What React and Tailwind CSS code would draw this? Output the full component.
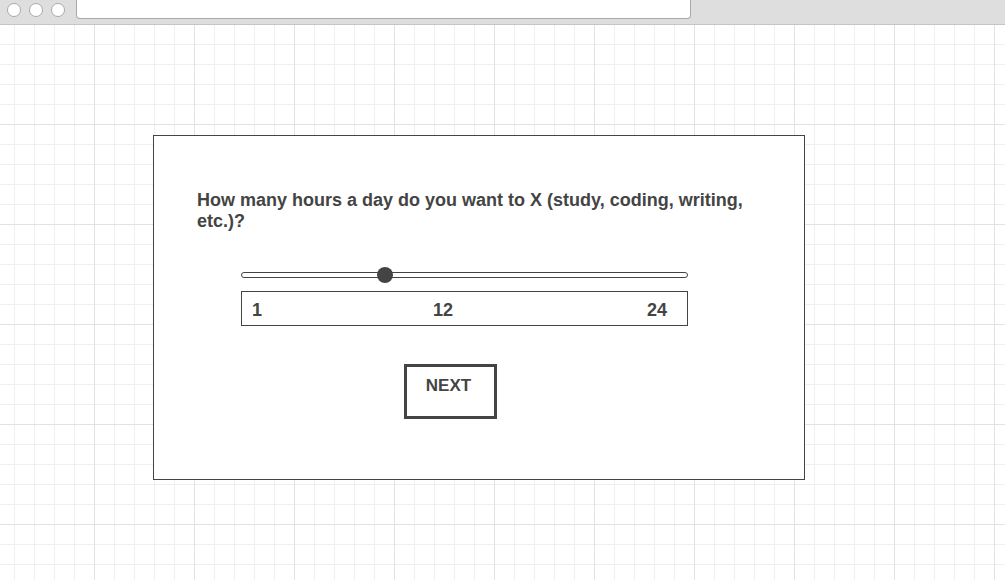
import React from "react";

export default function App() {
  const labels = ["1", "12", "24"];

  return (
    <div className="min-h-[580px] w-full bg-white bg-[image:linear-gradient(to_right,#e2e2e2_1px,transparent_1px),linear-gradient(to_bottom,#e2e2e2_1px,transparent_1px),linear-gradient(to_right,#efefef_1px,transparent_1px),linear-gradient(to_bottom,#efefef_1px,transparent_1px)] bg-[size:100px_100px,100px_100px,20px_20px,20px_20px] bg-[position:94px_24px,94px_24px,14px_4px,14px_4px] font-['Liberation_Sans',Arial,sans-serif] text-[#444]">
      {/* browser chrome */}
      <div className="flex h-[25px] items-start gap-[8px] border-b border-[#c4c4c4] bg-[#dedede] pl-[7px]">
        {[0, 1, 2].map((i) => (
          <span key={i} className="mt-[3px] h-[14px] w-[14px] rounded-full border border-[#a9a9a9] bg-white" />
        ))}
        <div className="ml-[3px] h-[19px] w-[615px] rounded-b-[4px] border border-t-0 border-[#a9a9a9] bg-white" />
      </div>

      <main className="pl-[153px] pt-[110px]">
        <section className="h-[345px] w-[652px] border border-[#444] bg-white pl-[43px] pt-[54px]">
          <h1 className="w-[565px] text-[18px] font-bold leading-[21px] text-[#444]">
            How many hours a day do you want to X (study, coding, writing, etc.)?
          </h1>

          <div className="ml-[44px] mt-[35px] w-[447px]">
            <div className="relative flex h-[16px] items-center">
              <div className="h-[6px] w-full rounded-full border border-[#444] bg-white" />
              <span className="absolute left-[136px] top-0 h-[16px] w-[16px] rounded-full bg-[#444]" />
            </div>

            <div className="mt-[8px] flex h-[35px] items-center border border-[#444] bg-white pl-[10px] pr-[20px] pt-[4px] text-[18px] font-bold">
              <span>{labels[0]}</span>
              <span className="ml-[171px]">{labels[1]}</span>
              <span className="ml-auto">{labels[2]}</span>
            </div>

            <button
              type="button"
              className="ml-[163px] mt-[38px] block h-[55px] w-[93px] border-[3px] border-[#444] bg-white pt-[9px] text-center align-top text-[17px] font-bold leading-[20px] text-[#444]"
            >
              <span className="block h-full pr-[4px]">NEXT</span>
            </button>
          </div>
        </section>
      </main>
    </div>
  );
}
